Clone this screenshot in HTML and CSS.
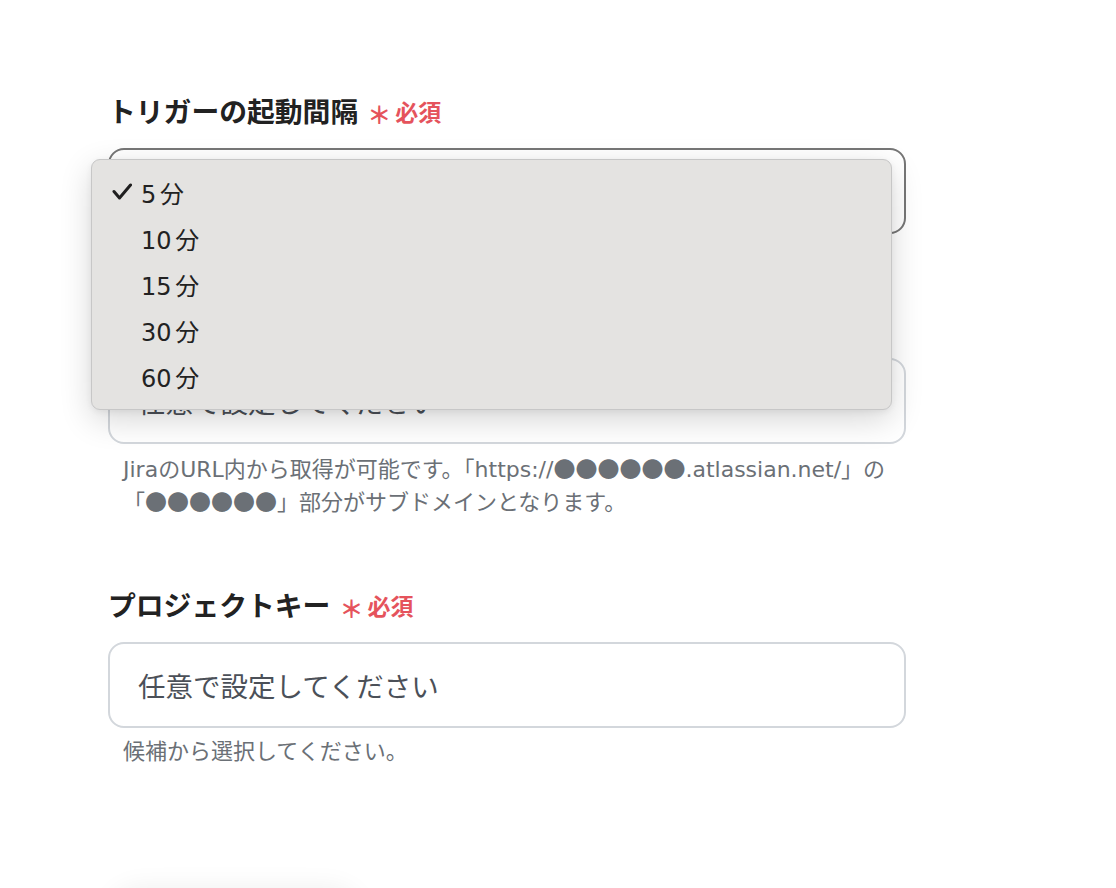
FILE: index.html
```html
<!DOCTYPE html>
<html lang="ja">
<head>
<meta charset="utf-8">
<title>トリガー設定</title>
<link rel="stylesheet" href="styles.css">
</head>
<body>
<form class="form">
  <div class="field">
    <div class="label"><span class="label-text">トリガーの起動間隔</span><span class="req"><span class="ast">＊</span>必須</span></div>
    <div class="control">
      <div class="select">5分</div>
      <ul class="menu">
        <li class="item"><svg class="check" width="20" height="18" viewBox="0 0 20 18"><path d="M2 8.5 L7.5 15 L18.5 2" fill="none" stroke="#1f1f1f" stroke-width="3" stroke-linecap="round" stroke-linejoin="round"/></svg><span>5 分</span></li>
        <li class="item"><span class="check"></span><span>10 分</span></li>
        <li class="item"><span class="check"></span><span>15 分</span></li>
        <li class="item"><span class="check"></span><span>30 分</span></li>
        <li class="item"><span class="check"></span><span>60 分</span></li>
      </ul>
    </div>
  </div>

  <div class="field">
    <div class="label"><span class="label-text">サブドメイン</span><span class="req"><span class="ast">＊</span>必須</span></div>
    <div class="input"><span class="placeholder">任意で設定してください</span></div>
    <p class="help">JiraのURL内から取得が可能です。「https://<span class="mask">●●●●●●</span>.atlassian.net/」の「<span class="mask">●●●●●●</span>」部分がサブドメインとなります。</p>
  </div>

  <div class="field">
    <div class="label"><span class="label-text">プロジェクトキー</span><span class="req"><span class="ast">＊</span>必須</span></div>
    <div class="input"><span class="placeholder">任意で設定してください</span></div>
    <p class="help">候補から選択してください。</p>
  </div>

  <div class="actions"><div class="action-btn"></div></div>
</form>
</body>
</html>
```

FILE: styles.css
```css
html, body {
  margin: 0;
  padding: 0;
  background: #ffffff;
  overflow: hidden;
}

body {
  font-family: "Noto Sans CJK JP", "Noto Sans", sans-serif;
  color: #222222;
  height: 888px;
}

.form {
  width: 798px;
  padding: 90px 0 0 108px;
}

.field {
  margin-bottom: 66px;
}

.label {
  display: flex;
  align-items: center;
  gap: 9px;
  height: 40px;
  margin-bottom: 18px;
  font-weight: 700;
  color: #222222;
}

.label-text {
  font-size: 27.8px;
  line-height: 40px;
}

.req {
  display: inline-flex;
  align-items: center;
  gap: 4px;
  color: #e5535c;
  font-size: 23px;
  line-height: 40px;
  font-weight: 700;
  position: relative;
  top: 1px;
}

.ast {
  position: relative;
  top: 3px;
  font-size: 24px;
}

.control {
  position: relative;
}

.select,
.input {
  box-sizing: border-box;
  height: 86px;
  border-radius: 16px;
  display: flex;
  align-items: center;
  padding: 0 28px;
  background: #ffffff;
}

.select {
  border: 2px solid #767676;
  font-size: 25px;
}

.input {
  border: 2px solid #d3d7dc;
}

.placeholder {
  font-size: 27.5px;
  color: #4b5058;
}

.menu {
  position: absolute;
  left: -17px;
  top: 11px;
  box-sizing: border-box;
  width: 801px;
  height: 251px;
  margin: 0;
  padding: 9px 0 0 0;
  list-style: none;
  background: #e4e3e1;
  border: 1px solid #c7c7c7;
  border-radius: 9px;
  box-shadow: 0 10px 32px rgba(0, 0, 0, 0.16), 0 2px 6px rgba(0, 0, 0, 0.06);
  z-index: 10;
}

.item {
  display: flex;
  align-items: center;
  height: 46px;
  padding-left: 20px;
  gap: 9px;
  font-family: "DejaVu Sans", "Noto Sans CJK JP", sans-serif;
  font-size: 24px;
  color: #222222;
  word-spacing: -4px;
}

.check {
  display: inline-block;
  width: 20px;
  height: 18px;
  flex: none;
}

.help {
  margin: 8px 0 0 0;
  padding-left: 15px;
  font-family: "DejaVu Sans", "Noto Sans CJK JP", sans-serif;
  font-size: 22px;
  line-height: 31px;
  color: #6b7076;
}

.mask {
  font-family: "Noto Sans CJK JP", sans-serif;
}

.actions {
  padding-top: 56px;
}

.action-btn {
  width: 250px;
  height: 60px;
  margin-left: 2px;
  border-radius: 30px;
  box-shadow: 0 0 28px rgba(0, 0, 0, 0.07);
}
```
